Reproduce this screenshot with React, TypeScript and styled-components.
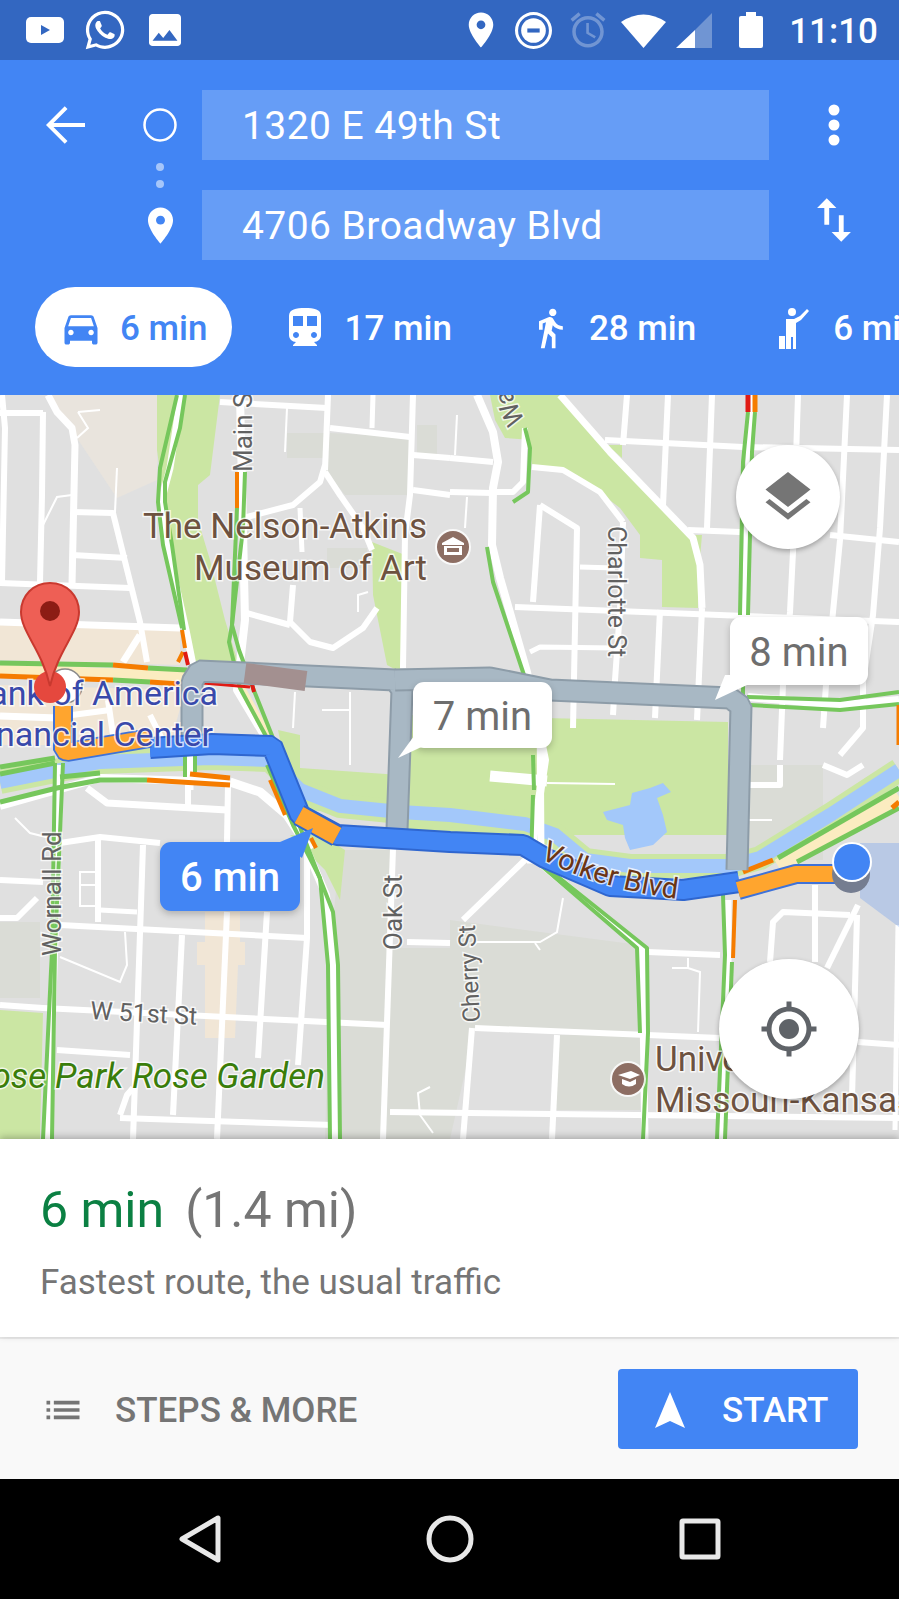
import React from "react";
import styled, { createGlobalStyle } from "styled-components";
import { FaWhatsapp } from "react-icons/fa";

const BLUE = "#4285f4";

const GlobalStyle = createGlobalStyle`
  html, body { margin: 0; padding: 0; background: #fff; }
  body { font-family: Roboto, "Noto Sans", sans-serif; }
`;

const Page = styled.div`
  width: 899px;
  height: 1599px;
  display: flex;
  flex-direction: column;
  overflow: hidden;
`;

/* status bar */
const StatusBar = styled.div`
  height: 60px;
  background: #3367c1;
  display: flex;
  align-items: center;
  justify-content: space-between;
  padding: 0 21px 0 26px;
  color: #fff;
`;
const StatusGroup = styled.div`
  display: flex;
  align-items: center;
`;
const StatusIcon = styled.svg<{ $ml?: number }>`
  display: block;
  fill: #fff;
  margin-left: ${(p) => p.$ml || 0}px;
`;
const WhatsappWrap = styled.span`
  display: flex;
  font-size: 44px;
  margin: 0 22px 0 19px;
`;
const Clock = styled.span`
  font-size: 35px;
  font-weight: 500;
  margin-left: 26px;
  padding-top: 2px;
`;

/* directions header */
const Header = styled.div`
  height: 335px;
  box-sizing: border-box;
  background: ${BLUE};
  padding-top: 30px;
  display: flex;
  flex-direction: column;
`;
const RouteGrid = styled.div`
  display: grid;
  grid-template-columns: 130px 60px 579px 130px;
  grid-template-rows: 70px 30px 70px;
`;
const Cell = styled.div<{ $col?: number; $row?: number }>`
  grid-column: ${(p) => p.$col || "auto"};
  grid-row: ${(p) => p.$row || "auto"};
  display: flex;
  align-items: center;
  justify-content: center;
`;
const InputCell = styled.div<{ $row: number }>`
  grid-column: 3;
  grid-row: ${(p) => p.$row};
  margin-left: 12px;
  background: #669df6;
  display: flex;
  align-items: center;
  padding: 2px 0 0 40px;
  box-sizing: border-box;
  color: #fff;
  font-size: 39px;
  letter-spacing: 0.45px;
`;
const Dots = styled.div`
  grid-column: 2;
  grid-row: 2;
  display: flex;
  flex-direction: column;
  align-items: center;
  justify-content: center;
  gap: 9px;
`;
const Dot = styled.span`
  width: 8px;
  height: 8px;
  border-radius: 50%;
  background: #a6c6fa;
`;
const HeaderIcon = styled.svg<{ $up?: number }>`
  display: block;
  fill: #fff;
  margin-bottom: ${(p) => p.$up || 0}px;
`;
const ModeRow = styled.div`
  display: flex;
  gap: 27px;
  margin-top: 27px;
  padding-left: 35px;
  white-space: nowrap;
`;
const ModeChip = styled.div<{ $active?: boolean }>`
  height: 80px;
  flex: none;
  box-sizing: border-box;
  padding: 2px 25px 0 24px;
  border-radius: 40px;
  display: flex;
  align-items: center;
  gap: 17px;
  font-size: 35px;
  font-weight: 500;
  color: ${(p) => (p.$active ? BLUE : "#fff")};
  background: ${(p) => (p.$active ? "#fff" : "transparent")};
`;
const ModeIcon = styled.svg`
  display: block;
  flex: none;
  width: 44px;
  height: 44px;
  overflow: visible;
  fill: currentColor;
`;

/* map */
const MapArea = styled.div`
  position: relative;
  height: 744px;
  overflow: hidden;
  background: #e0e0e0;
`;
const MapSvg = styled.svg`
  display: block;
  width: 899px;
  height: 744px;
`;
const MapLabel = styled.text<{ $color: string; $size?: number; $italic?: boolean }>`
  font-family: Roboto, sans-serif;
  font-size: ${(p) => p.$size || 35}px;
  font-style: ${(p) => (p.$italic ? "italic" : "normal")};
  fill: ${(p) => p.$color};
  stroke: rgba(255, 255, 255, 0.75);
  stroke-width: 3px;
  paint-order: stroke;
`;
const Bubble = styled.div<{ $left: number; $top: number; $w: number; $h: number; $primary?: boolean }>`
  position: absolute;
  left: ${(p) => p.$left}px;
  top: ${(p) => p.$top}px;
  width: ${(p) => p.$w}px;
  height: ${(p) => p.$h}px;
  border-radius: 11px;
  display: flex;
  align-items: center;
  justify-content: center;
  font-size: 40px;
  padding-top: 2px;
  box-sizing: border-box;
  font-weight: ${(p) => (p.$primary ? 500 : 400)};
  color: ${(p) => (p.$primary ? "#fff" : "#6e6e6e")};
  background: ${(p) => (p.$primary ? BLUE : "#fff")};
  box-shadow: 0 3px 7px rgba(0, 0, 0, 0.22);
`;
const BubbleTail = styled.svg<{ $left: number; $top: number }>`
  position: absolute;
  left: ${(p) => p.$left}px;
  top: ${(p) => p.$top}px;
  overflow: visible;
`;
const Fab = styled.div<{ $cx: number; $cy: number; $size: number }>`
  position: absolute;
  left: ${(p) => p.$cx - p.$size / 2}px;
  top: ${(p) => p.$cy - p.$size / 2}px;
  width: ${(p) => p.$size}px;
  height: ${(p) => p.$size}px;
  border-radius: 50%;
  background: #fff;
  box-shadow: 0 2px 5px rgba(0, 0, 0, 0.3);
  display: flex;
  align-items: center;
  justify-content: center;
`;

/* bottom sheet */
const Summary = styled.div`
  height: 198px;
  box-sizing: border-box;
  background: #fff;
  padding: 37px 0 0 40px;
  box-shadow: 0 -2px 7px rgba(0, 0, 0, 0.25);
  position: relative;
`;
const SummaryLine = styled.div`
  display: flex;
  gap: 21px;
  font-size: 50px;
  line-height: 68px;
`;
const Duration = styled.span`
  color: #0b8043;
`;
const Distance = styled.span`
  color: #757575;
`;
const Note = styled.div`
  margin-top: 18px;
  font-size: 35px;
  line-height: 42px;
  color: #757575;
`;
const ActionBar = styled.div`
  height: 142px;
  box-sizing: border-box;
  background: #f9f9f9;
  border-top: 2px solid #ebebeb;
  padding: 0 41px;
  display: flex;
  align-items: center;
  justify-content: space-between;
`;
const StepsButton = styled.div`
  display: flex;
  align-items: center;
  gap: 30px;
  color: #757575;
  font-size: 35px;
  font-weight: 500;
  padding-top: 2px;
`;
const StartButton = styled.div`
  width: 240px;
  height: 80px;
  box-sizing: border-box;
  border-radius: 4px;
  background: ${BLUE};
  color: #fff;
  display: flex;
  align-items: center;
  font-size: 35px;
  font-weight: 500;
  gap: 37px;
  padding: 2px 0 0 37px;
`;
const NavBar = styled.div`
  height: 120px;
  background: #000;
  display: flex;
  align-items: center;
  justify-content: center;
`;
const NavSlot = styled.div`
  width: 250px;
  display: flex;
  justify-content: center;
`;

/* map data, all in page coordinates */
type Line = [string, number];

const parks = [
  "157,395 220,395 210,475 198,485 198,520 210,560 225,620 238,662 195,665 165,510 157,450",
  "517,395 560,395 610,452 693,538 698,562 698,608 662,607 662,560 640,558 640,535 620,508 577,475 532,465 530,445 517,412",
  "490,395 520,395 532,440 505,438 495,420",
  "607,445 622,445 622,458",
  "688,535 702,535 700,558",
  "408,715 728,722 728,835 408,835",
  "372,542 405,555 400,672 387,665 373,595",
  "0,1010 43,1013 40,1139 0,1139",
  "278,730 300,735 300,800 290,790",
  "300,768 400,775 400,815 300,810",
  "290,835 320,835 345,850 340,900 325,870",
];
const darkPatches = [
  "287,433 325,433 325,458 287,458",
  "330,433 410,437 410,495 345,495 325,470",
  "417,425 437,425 437,455 417,455",
  "327,548 367,548 367,568 327,568",
  "0,922 40,922 40,998 0,998",
  "340,850 393,850 383,1139 325,1139 330,950",
  "390,948 450,948 450,1139 385,1139",
  "450,920 640,945 640,1032 475,1028 450,1139",
  "560,1035 640,1035 640,1110 555,1110",
  "747,765 823,765 823,860 747,860",
  "483,750 530,750 530,807 483,807",
];
const beige = [
  "0,625 180,630 180,665 0,660",
  "0,685 185,690 170,745 0,745",
  "205,912 240,912 240,942 245,942 245,965 238,965 235,1038 205,1038 205,965 197,965 197,942 205,942",
  "347,962 365,962 367,982 370,962 385,962 385,983 403,983 403,1042 340,1042 340,990 347,985",
];
const paleBeige = ["50,395 157,395 157,480 117,498 77,438", "480,942 512,942 510,1018 480,1018"];
const roads: Line[] = [
  ["2,395 5,428 2,582", 6],
  ["43,412 42,495 40,582", 6],
  ["0,413 43,413", 6],
  ["48,395 57,412 72,428 75,445 72,585", 7],
  ["73,512 113,513 140,622 147,662", 6],
  ["72,555 127,558", 6],
  ["0,583 130,588", 6],
  ["0,622 180,628", 7],
  ["140,635 123,662", 7],
  ["72,715 110,710", 6],
  ["108,700 113,735", 6],
  ["150,715 165,745", 6],
  ["0,716 58,718", 7],
  ["220,402 327,408", 6],
  ["328,395 325,470", 6],
  ["330,428 410,437", 6],
  ["413,395 410,495 405,535 403,668", 6],
  ["413,455 450,458", 6],
  ["413,490 450,495", 6],
  ["373,395 372,428", 5],
  ["325,465 320,482 293,505 243,518", 6],
  ["325,472 340,495 363,528 372,550", 6],
  ["300,508 302,552", 5],
  ["293,585 290,622 310,642 333,648 363,628 377,608", 6],
  ["243,612 290,625", 6],
  ["181,395 170,468 161,502 167,545 186,630 193,665", 7],
  ["240,395 245,620 237,690 270,745", 8],
  ["272,765 298,830 326,895 333,965 335,1139", 8],
  ["477,395 493,432 498,462 493,488 492,545 500,578 527,672 545,760 530,860", 8],
  ["493,492 513,492 523,482 525,428", 6],
  ["450,458 493,462", 6],
  ["450,492 493,493", 6],
  ["627,395 623,445", 6],
  ["623,522 620,610 615,680 613,715", 6],
  ["668,395 663,505", 6],
  ["660,610 655,718", 6],
  ["712,395 707,528", 6],
  ["702,608 697,720", 6],
  ["751,395 745,620", 7],
  ["798,395 793,552 790,612 783,685 780,760", 6],
  ["847,395 840,540 833,612 826,685 823,728", 6],
  ["887,395 880,528 873,615 863,682 863,728 840,755", 6],
  ["605,440 743,447 899,450", 6],
  ["688,530 740,532", 6],
  ["830,535 899,542", 6],
  ["515,607 899,622", 6],
  ["532,467 563,470 600,492 623,522", 6],
  ["560,395 610,452 693,538 700,565 702,608", 7],
  ["540,505 577,528 573,728", 6],
  ["540,505 533,602", 6],
  ["580,567 615,568", 5],
  ["530,652 540,647 615,648", 5],
  ["490,776 547,781", 11],
  ["747,785 780,785 780,765", 6],
  ["823,765 847,775 863,765", 6],
  ["87,788 107,803 227,810", 7],
  ["188,782 188,805", 6],
  ["228,785 227,842", 6],
  ["230,782 260,792 287,815 310,850", 9],
  ["60,843 100,837 160,843", 6],
  ["98,840 98,922", 6],
  ["143,845 133,1139", 6],
  ["100,910 137,912", 5],
  ["0,880 43,882", 6],
  ["0,918 17,918 37,898", 6],
  ["60,925 307,938", 6],
  ["227,912 217,1139", 6],
  ["267,912 258,1058", 6],
  ["182,935 173,1115", 6],
  ["307,852 307,938 298,1065", 6],
  ["0,1005 43,1008 387,1025", 6],
  ["393,848 383,1139", 6],
  ["407,942 450,943", 6],
  ["57,1050 130,1055", 6],
  ["120,1118 333,1125", 6],
  ["120,1115 127,1095 133,1088", 6],
  ["463,920 527,858", 6],
  ["648,952 720,955", 6],
  ["475,1028 720,1038", 6],
  ["858,1042 899,1045", 6],
  ["472,1028 463,1139", 6],
  ["557,1035 552,1139", 6],
  ["390,1112 899,1118", 6],
  ["815,885 815,962", 6],
  ["770,962 773,922 783,912 850,915", 6],
  ["858,905 827,968", 6],
  ["857,915 852,1098", 6],
  ["898,925 895,1130", 5],
  ["540,700 541,860 527,860", 7],
  ["542,865 642,948 645,1139", 7],
  ["748,697 840,705 899,700", 8],
  ["728,900 728,960 721,1139", 7],
  ["60,765 48,1139", 8],
  ["190,745 190,790", 7],
  ["0,806 57,790 100,778 230,782", 8],
];
const thinRoads = [
  "117,468 115,512",
  "78,412 88,428 77,438",
  "100,410 78,412",
  "72,495 57,497 43,525",
  "287,408 285,452",
  "295,692 293,728",
  "322,710 350,710",
  "350,692 350,765",
  "368,592 358,595 358,612",
  "457,415 455,455",
  "467,497 465,528",
  "60,957 120,982 127,965 125,932",
  "15,818 30,833 50,838",
  "430,1087 418,1093 420,1115 433,1133",
  "80,872 80,906 100,906 80,906 80,885 100,885 80,885 80,872 100,872",
  "672,968 688,968 700,972 698,1032",
  "688,958 688,968",
  "563,898 557,932 540,942 477,942 470,947",
  "535,943 540,950",
  "747,820 772,820",
  "547,783 615,784",
];
const traffic: Line[] = [
  ["177,395 160,468 158,502 163,545 182,628", 4],
  ["185,395 180,428 165,482 165,502 172,545 184,630", 4],
  ["245,472 243,528 232,625 229,642 240,688 267,738", 4],
  ["237,508 232,625 239,650 253,688 273,738", 4],
  ["267,765 293,825 320,878 328,965 330,1139", 4],
  ["277,765 303,835 333,912 338,965 340,1139", 4],
  ["0,663 113,665", 5],
  ["148,668 187,670", 5],
  ["113,680 150,682", 5],
  ["0,802 57,788 100,780 147,780", 5],
  ["60,777 100,773", 5],
  ["0,767 55,758", 5],
  ["0,774 55,763", 5],
  ["55,763 52,950 43,1139", 4],
  ["63,763 55,950 52,1139", 4],
  ["185,753 185,777", 4],
  ["195,753 195,772", 4],
  ["537,862 637,948 640,1033", 4],
  ["547,868 647,948 648,1033 643,1139", 4],
  ["723,895 725,955 717,1139", 4],
  ["732,962 725,1139", 4],
  ["748,412 743,462 740,615", 4],
  ["755,412 752,452 748,615", 4],
  ["743,685 743,697", 4],
  ["747,697 840,700 899,692", 4],
  ["750,705 840,710 899,704", 4],
  ["778,858 899,788", 5],
  ["797,862 899,808", 5],
  ["525,428 530,448 528,492 513,502", 4],
  ["487,547 493,582 525,678", 4],
  ["533,755 534,790", 4],
  ["533,795 531,860", 4],
];
const congested: Line[] = [
  ["113,665 148,668", 5],
  ["0,676 113,680", 5],
  ["150,682 180,684", 5],
  ["147,780 230,785", 5],
  ["190,774 230,778", 5],
  ["237,472 237,508", 4],
  ["182,630 185,648", 4],
  ["178,662 183,652", 4],
  ["755,395 755,412", 5],
  ["735,900 733,958", 4],
  ["743,872 773,860", 5],
  ["892,808 899,802", 5],
  ["898,705 898,745", 3],
  ["270,780 285,815", 4],
  ["311,838 316,848", 4],
];
const jammed: Line[] = [
  ["185,652 188,665", 4],
  ["203,683 250,687", 3],
  ["252,684 254,692", 4],
  ["748,395 748,412", 5],
];
const RIVER = "0,782 60,770 100,762 210,758 270,760 300,790 340,806 400,812 450,815 525,824 555,835 585,860 630,866 730,866 760,858 830,815 899,770";

const Polys = ({ points, fill }: { points: string[]; fill: string }) => (
  <>
    {points.map((p) => (
      <polygon key={p} points={p} fill={fill} />
    ))}
  </>
);

const Lines = ({ lines, color }: { lines: Line[]; color: string }) => (
  <>
    {lines.map(([p, w]) => (
      <polyline key={p} points={p} fill="none" stroke={color} strokeWidth={w} strokeLinejoin="round" />
    ))}
  </>
);

const Band = ({ points, fill, edge, width }: { points: string; fill: string; edge: string; width: number }) => (
  <>
    <polyline points={points} fill="none" stroke={edge} strokeWidth={width} strokeLinejoin="bevel" />
    <polyline points={points} fill="none" stroke={fill} strokeWidth={width - 4} strokeLinejoin="bevel" />
  </>
);

const MapDrawing = () => (
  <MapSvg viewBox="0 395 899 744">
    <Polys points={paleBeige} fill="#e9e4dd" />
    <Polys points={beige} fill="#f1e6d6" />
    <Polys points={darkPatches} fill="#dadcd6" />
    <Polys points={parks} fill="#cbe6a3" />

    {/* river and pond */}
    <polyline points={RIVER} fill="none" stroke="#cbe6a3" strokeWidth="24" />
    <polyline points={RIVER} fill="none" stroke="#a3c8fa" strokeWidth="14" />
    <polygon
      points="603,812 630,805 632,793 650,788 663,783 671,792 657,798 663,815 667,832 653,845 630,850 625,838 623,825 607,820"
      fill="#a3c8fa"
    />

    <Lines lines={roads} color="#fff" />
    {thinRoads.map((p) => (
      <polyline key={p} points={p} fill="none" stroke="#fff" strokeWidth="2" />
    ))}

    {/* big roads with a cream middle */}
    <polyline points="0,670 187,677" fill="none" stroke="#fbecc0" strokeWidth="12" />
    <polyline points="778,866 899,797" fill="none" stroke="#fbecc0" strokeWidth="14" />
    <polyline points="240,685 270,740" fill="none" stroke="#fbecc0" strokeWidth="7" />

    <Lines lines={traffic} color="#76c75c" />
    <Lines lines={congested} color="#f57c00" />
    <Lines lines={jammed} color="#e01b14" />

    {/* alternate routes */}
    <Band points="192,735 192,682 199,671 395,680 402,690 397,830" fill="#a8b8c4" edge="#8d9ca8" width={23} />
    <Band points="395,680 490,678 550,690 730,698 741,706 737,870" fill="#a8b8c4" edge="#8d9ca8" width={23} />
    <polyline points="245,673 306,681" fill="none" stroke="#a39090" strokeWidth="20" />

    {/* chosen route */}
    <Band
      points="150,748 212,744 272,746 300,815 337,835 450,842 523,845 545,858 610,886 683,890 739,882"
      fill={BLUE}
      edge="#2f66cf"
      width={22}
    />
    <Band points="63,706 63,750 67,752 150,738" fill="#ffa52e" edge="#3f72d8" width={20} />
    <Band points="299,815 337,836" fill="#ffa52e" edge="#2f66cf" width={22} />
    <Band points="738,890 796,874 835,874" fill="#ffa52e" edge="#3f72d8" width={20} />

    {/* my location */}
    <polygon points="860,843 899,843 899,927 860,898" fill={BLUE} opacity="0.25" />
    <circle cx="851" cy="874" r="19" fill="#757d90" />
    <circle cx="852" cy="862" r="20" fill="#fff" />
    <circle cx="852" cy="862" r="18" fill={BLUE} />

    {/* bank badge lies under the label */}
    <circle cx="65" cy="686" r="17" fill="#fff" stroke="#8a8a8a" strokeWidth="1.5" />

    {/* map labels */}
    <MapLabel $color="#6d5240" x="427" y="538" textAnchor="end">The Nelson-Atkins</MapLabel>
    <MapLabel $color="#6d5240" x="427" y="580" textAnchor="end">Museum of Art</MapLabel>
    <MapLabel $color="#616161" $size={26} transform="translate(252 472) rotate(-90)">Main St</MapLabel>
    <MapLabel $color="#616161" $size={26} transform="translate(525 421) rotate(-115)">Ward Pkwy</MapLabel>
    <MapLabel $color="#616161" $size={25} transform="translate(608 526) rotate(90)">Charlotte St</MapLabel>
    <MapLabel $color="#616161" $size={26} transform="translate(61 956) rotate(-90)">Wornall Rd</MapLabel>
    <MapLabel $color="#616161" $size={26} transform="translate(402 950) rotate(-90)">Oak St</MapLabel>
    <MapLabel $color="#616161" $size={24} transform="translate(480 1022) rotate(-93)">Cherry St</MapLabel>
    <MapLabel $color="#616161" $size={25} transform="translate(90 1019) rotate(3)">W 51st St</MapLabel>
    <MapLabel $color="#3949ab" $size={34} x="218" y="705" textAnchor="end">Bank of America</MapLabel>
    <MapLabel $color="#3949ab" $size={34} x="213" y="746" textAnchor="end">Financial Center</MapLabel>
    <MapLabel $color="#3a7d0a" $italic x="325" y="1088" textAnchor="end">Loose Park Rose Garden</MapLabel>
    <MapLabel $color="#6d5240" x="655" y="1071">University of</MapLabel>
    <MapLabel $color="#6d5240" x="655" y="1112">Missouri-Kansas City</MapLabel>
    <path id="volker" d="M540 858 Q600 890 686 900" fill="none" />
    <MapLabel $color="#6b3514" $size={29}>
      <textPath href="#volker">Volker Blvd</textPath>
    </MapLabel>

    {/* place badges */}
    <circle cx="453" cy="547" r="18" fill="#fff" opacity="0.8" />
    <circle cx="453" cy="547" r="16" fill="#8d6e63" />
    <path d="M453 537 l11 6 v2 h-22 v-2z M444 546 h18 v9 h-18z" fill="#fff" />
    <rect x="447" y="548" width="12" height="4" fill="#8d6e63" />
    <circle cx="628" cy="1079" r="18" fill="#fff" opacity="0.8" />
    <circle cx="628" cy="1079" r="16" fill="#8d6e63" />
    <path d="M618 1075 l13 -4 l9 4 l-10 4z M622 1079 l8 3 l6 -3 v5 q-7 5 -14 0z" fill="#fff" />

    {/* destination pin */}
    <circle cx="50" cy="687" r="16" fill="#e5483e" />
    <path
      d="M50 583 C33 583 21 596 21 612 C21 632 42 650 50 686 C58 650 79 632 79 612 C79 596 67 583 50 583 Z"
      fill="#ee5f55"
      stroke="#c9392f"
      strokeWidth="2"
    />
    <circle cx="50" cy="611" r="10" fill="#8c1c14" />
  </MapSvg>
);

const LayersIcon = () => (
  <svg width="60" height="60" viewBox="0 0 24 24" fill="#757575">
    <path d="M11.99 18.54l-7.37-5.73L3 14.07l9 7 9-7-1.63-1.27-7.38 5.74zM12 16l7.36-5.73L21 9l-9-7-9 7 1.63 1.27L12 16z" />
  </svg>
);

const LocateIcon = () => (
  <svg width="60" height="60" viewBox="0 0 24 24" fill="#5f6368">
    <path d="M12 8c-2.21 0-4 1.79-4 4s1.79 4 4 4 4-1.79 4-4-1.79-4-4-4zm8.94 3c-.46-4.17-3.77-7.48-7.94-7.94V1h-2v2.06C6.83 3.52 3.52 6.83 3.06 11H1v2h2.06c.46 4.17 3.77 7.48 7.94 7.94V23h2v-2.06c4.17-.46 7.48-3.77 7.94-7.94H23v-2h-2.06zM12 19c-3.87 0-7-3.13-7-7s3.13-7 7-7 7 3.13 7 7-3.13 7-7 7z" />
  </svg>
);

const PIN = "M12 2C8.13 2 5 5.13 5 9c0 5.25 7 13 7 13s7-7.75 7-13c0-3.87-3.13-7-7-7zm0 9.5c-1.38 0-2.5-1.12-2.5-2.5s1.12-2.5 2.5-2.5 2.5 1.12 2.5 2.5-1.12 2.5-2.5 2.5z";

export default function App() {
  return (
    <Page>
      <GlobalStyle />
      <StatusBar>
        <StatusGroup>
          <StatusIcon width="38" height="26" viewBox="0 0 38 26">
            <path d="M5 0h28a5 5 0 0 1 5 5v16a5 5 0 0 1-5 5H5a5 5 0 0 1-5-5V5a5 5 0 0 1 5-5z" />
            <path d="M15 8l9 5-9 5z" fill="#3367c1" />
          </StatusIcon>
          <WhatsappWrap>
            <FaWhatsapp />
          </WhatsappWrap>
          <StatusIcon width="32" height="32" viewBox="3 3 18 18">
            <path d="M21 19V5c0-1.1-.9-2-2-2H5c-1.1 0-2 .9-2 2v14c0 1.1.9 2 2 2h14c1.1 0 2-.9 2-2z" />
            <path d="M8.5 13.5l2.5 3.01L14.5 12l4.5 6H5z" fill="#3367c1" />
          </StatusIcon>
        </StatusGroup>
        <StatusGroup>
          <StatusIcon width="42" height="42" viewBox="0 0 24 24">
            <path d={PIN} />
          </StatusIcon>
          <StatusIcon $ml={13} width="37" height="37" viewBox="0 0 36 36">
            <path fillRule="evenodd" d="M18 0a18 18 0 1 1 0 36a18 18 0 1 1 0-36zM18 3a15 15 0 1 0 0 30a15 15 0 1 0 0-30z" />
            <circle cx="18" cy="18" r="12" />
            <rect x="12" y="16" width="12" height="4" fill="#3367c1" />
          </StatusIcon>
          <StatusIcon $ml={15} width="42" height="42" viewBox="0 0 24 24" opacity="0.3">
            <path d="M22 5.72l-4.6-3.86-1.29 1.53 4.6 3.86L22 5.72zM7.88 3.39L6.6 1.86 2 5.71l1.29 1.53 4.59-3.85zM12.5 8H11v6l4.75 2.85.75-1.23-4-2.37V8zM12 4c-4.97 0-9 4.03-9 9s4.03 9 9 9c4.97 0 9-4.03 9-9s-4.03-9-9-9zm0 16c-3.87 0-7-3.13-7-7s3.13-7 7-7 7 3.13 7 7-3.13 7-7 7z" />
          </StatusIcon>
          <StatusIcon $ml={12} width="45" height="35" viewBox="0 0 45 35">
            <path d="M0 9Q22.5-6 45 9L22.5 35z" />
          </StatusIcon>
          <StatusIcon $ml={10} width="36" height="35" viewBox="0 0 36 35">
            <path d="M36 0v35H19V17z" opacity="0.3" />
            <path d="M19 17v18H0z" />
          </StatusIcon>
          <StatusIcon $ml={27} width="24" height="36" viewBox="0 0 24 36">
            <path d="M7 0h10v4h5a2 2 0 0 1 2 2v28a2 2 0 0 1-2 2H2a2 2 0 0 1-2-2V6a2 2 0 0 1 2-2h5z" />
          </StatusIcon>
          <Clock>11:10</Clock>
        </StatusGroup>
      </StatusBar>

      <Header>
        <RouteGrid>
          <Cell $col={1} $row={1}>
            <HeaderIcon width="60" height="60" viewBox="0 0 24 24">
              <path d="M20 11.2H7.4l5.6-5.6-1.1-1.1L4.4 12l7.5 7.5 1.1-1.1-5.6-5.6H20z" />
            </HeaderIcon>
          </Cell>
          <Cell $col={2} $row={1}>
            <svg width="34" height="34" viewBox="0 0 34 34">
              <circle cx="17" cy="17" r="15.5" fill="none" stroke="#fff" strokeWidth="2.5" />
            </svg>
          </Cell>
          <InputCell $row={1}>1320 E 49th St</InputCell>
          <Cell $col={4} $row={1}>
            <svg width="12" height="42" viewBox="0 0 12 42" fill="#fff">
              <circle cx="6" cy="6" r="5.5" />
              <circle cx="6" cy="21" r="5.5" />
              <circle cx="6" cy="36" r="5.5" />
            </svg>
          </Cell>
          <Dots>
            <Dot />
            <Dot />
          </Dots>
          <Cell $col={2} $row={3}>
            <HeaderIcon width="43" height="43" viewBox="0 0 24 24">
              <path d={PIN} />
            </HeaderIcon>
          </Cell>
          <InputCell $row={3}>4706 Broadway Blvd</InputCell>
          <Cell $col={4} $row={3}>
            <HeaderIcon $up={10} width="58" height="58" viewBox="0 0 24 24">
              <path d="M16 17.01V10h-2v7.01h-3L15 21l4-3.99h-3zM9 3L5 6.99h3V14h2V6.99h3L9 3z" />
            </HeaderIcon>
          </Cell>
        </RouteGrid>

        <ModeRow>
          <ModeChip $active>
            <ModeIcon viewBox="0 0 24 24">
              <path d="M18.92 6.01C18.72 5.42 18.16 5 17.5 5h-11c-.66 0-1.21.42-1.42 1.01L3 12v8c0 .55.45 1 1 1h1c.55 0 1-.45 1-1v-1h12v1c0 .55.45 1 1 1h1c.55 0 1-.45 1-1v-8l-2.08-5.99zM6.5 16c-.83 0-1.5-.67-1.5-1.5S5.67 13 6.5 13s1.5.67 1.5 1.5S7.33 16 6.5 16zm11 0c-.83 0-1.5-.67-1.5-1.5s.67-1.5 1.5-1.5 1.5.67 1.5 1.5-.67 1.5-1.5 1.5zM5 11l1.5-4.5h11L19 11H5z" />
            </ModeIcon>
            6 min
          </ModeChip>
          <ModeChip>
            <ModeIcon viewBox="1 1 22 22">
              <path d="M12 2c-4.42 0-8 .5-8 4v9.5C4 17.43 5.57 19 7.5 19L6 20.5v.5h12v-.5L16.5 19c1.93 0 3.5-1.57 3.5-3.5V6c0-3.5-3.58-4-8-4zM7.5 17c-.83 0-1.5-.67-1.5-1.5S6.67 14 7.5 14s1.5.67 1.5 1.5S8.33 17 7.5 17zm3.5-6H6V6h5v5zm5.5 6c-.83 0-1.5-.67-1.5-1.5s.67-1.5 1.5-1.5 1.5.67 1.5 1.5-.67 1.5-1.5 1.5zm1.5-6h-5V6h5v5z" />
            </ModeIcon>
            17 min
          </ModeChip>
          <ModeChip>
            <ModeIcon viewBox="0 0 24 24">
              <path d="M13.5 5.5c1.1 0 2-.9 2-2s-.9-2-2-2-2 .9-2 2 .9 2 2 2zM9.8 8.9L7 23h2.1l1.8-8 2.1 2v6h2v-7.5l-2.1-2 .6-3C14.8 12 16.8 13 19 13v-2c-1.9 0-3.5-1-4.3-2.4l-1-1.6c-.4-.6-1-1-1.7-1-.3 0-.5.1-.8.1L6 8.3V13h2V9.6l1.8-.7" />
            </ModeIcon>
            28 min
          </ModeChip>
          <ModeChip>
            <ModeIcon viewBox="0 0 44 44">
              <circle cx="20" cy="6" r="4" />
              <path d="M14 13h8l6-3 7-7 2 2-8 9-5 3v26h-3V31h-2v12h-5z" />
              <rect x="7" y="30" width="6" height="13" />
            </ModeIcon>
            6 min
          </ModeChip>
        </ModeRow>
      </Header>

      <MapArea>
        <MapDrawing />
        <Bubble $left={730} $top={222} $w={138} $h={68}>
          <BubbleTail $left={-15} $top={58} width="30" height="25">
            <path d="M0 25L10 0h22v10z" fill="#fff" />
          </BubbleTail>
          8 min
        </Bubble>
        <Bubble $left={413} $top={287} $w={139} $h={66}>
          <BubbleTail $left={-15} $top={54} width="34" height="22">
            <path d="M0 22L16 0h18v6z" fill="#fff" />
          </BubbleTail>
          7 min
        </Bubble>
        <Bubble $primary $left={160} $top={447} $w={140} $h={69}>
          <BubbleTail $left={120} $top={-14} width="33" height="32">
            <path d="M33 0L22 30L0 14z" fill={BLUE} />
          </BubbleTail>
          6 min
        </Bubble>
        <Fab $cx={788} $cy={102} $size={104}>
          <LayersIcon />
        </Fab>
        <Fab $cx={789} $cy={634} $size={140}>
          <LocateIcon />
        </Fab>
      </MapArea>

      <Summary>
        <SummaryLine>
          <Duration>6 min</Duration>
          <Distance>(1.4 mi)</Distance>
        </SummaryLine>
        <Note>Fastest route, the usual traffic</Note>
      </Summary>

      <ActionBar>
        <StepsButton>
          <svg width="44" height="44" viewBox="0 0 24 24" fill="#757575">
            <path d="M3 13h2v-2H3v2zm0 4h2v-2H3v2zm0-8h2V7H3v2zm4 4h14v-2H7v2zm0 4h14v-2H7v2zM7 7v2h14V7H7z" />
          </svg>
          STEPS &amp; MORE
        </StepsButton>
        <StartButton>
          <svg width="30" height="36" viewBox="0 0 30 36" fill="#fff">
            <path d="M15 0l15 36-15-7-15 7z" />
          </svg>
          START
        </StartButton>
      </ActionBar>

      <NavBar>
        <NavSlot>
          <svg width="46" height="50" viewBox="0 0 46 50" fill="none" stroke="#e8e8e8" strokeWidth="5" strokeLinejoin="round">
            <path d="M41 4v42L5 25z" />
          </svg>
        </NavSlot>
        <NavSlot>
          <svg width="50" height="50" viewBox="0 0 50 50" fill="none" stroke="#e8e8e8" strokeWidth="5">
            <circle cx="25" cy="25" r="21" />
          </svg>
        </NavSlot>
        <NavSlot>
          <svg width="42" height="42" viewBox="0 0 42 42" fill="none" stroke="#e8e8e8" strokeWidth="5" strokeLinejoin="round">
            <rect x="3" y="3" width="36" height="36" rx="1" />
          </svg>
        </NavSlot>
      </NavBar>
    </Page>
  );
}
